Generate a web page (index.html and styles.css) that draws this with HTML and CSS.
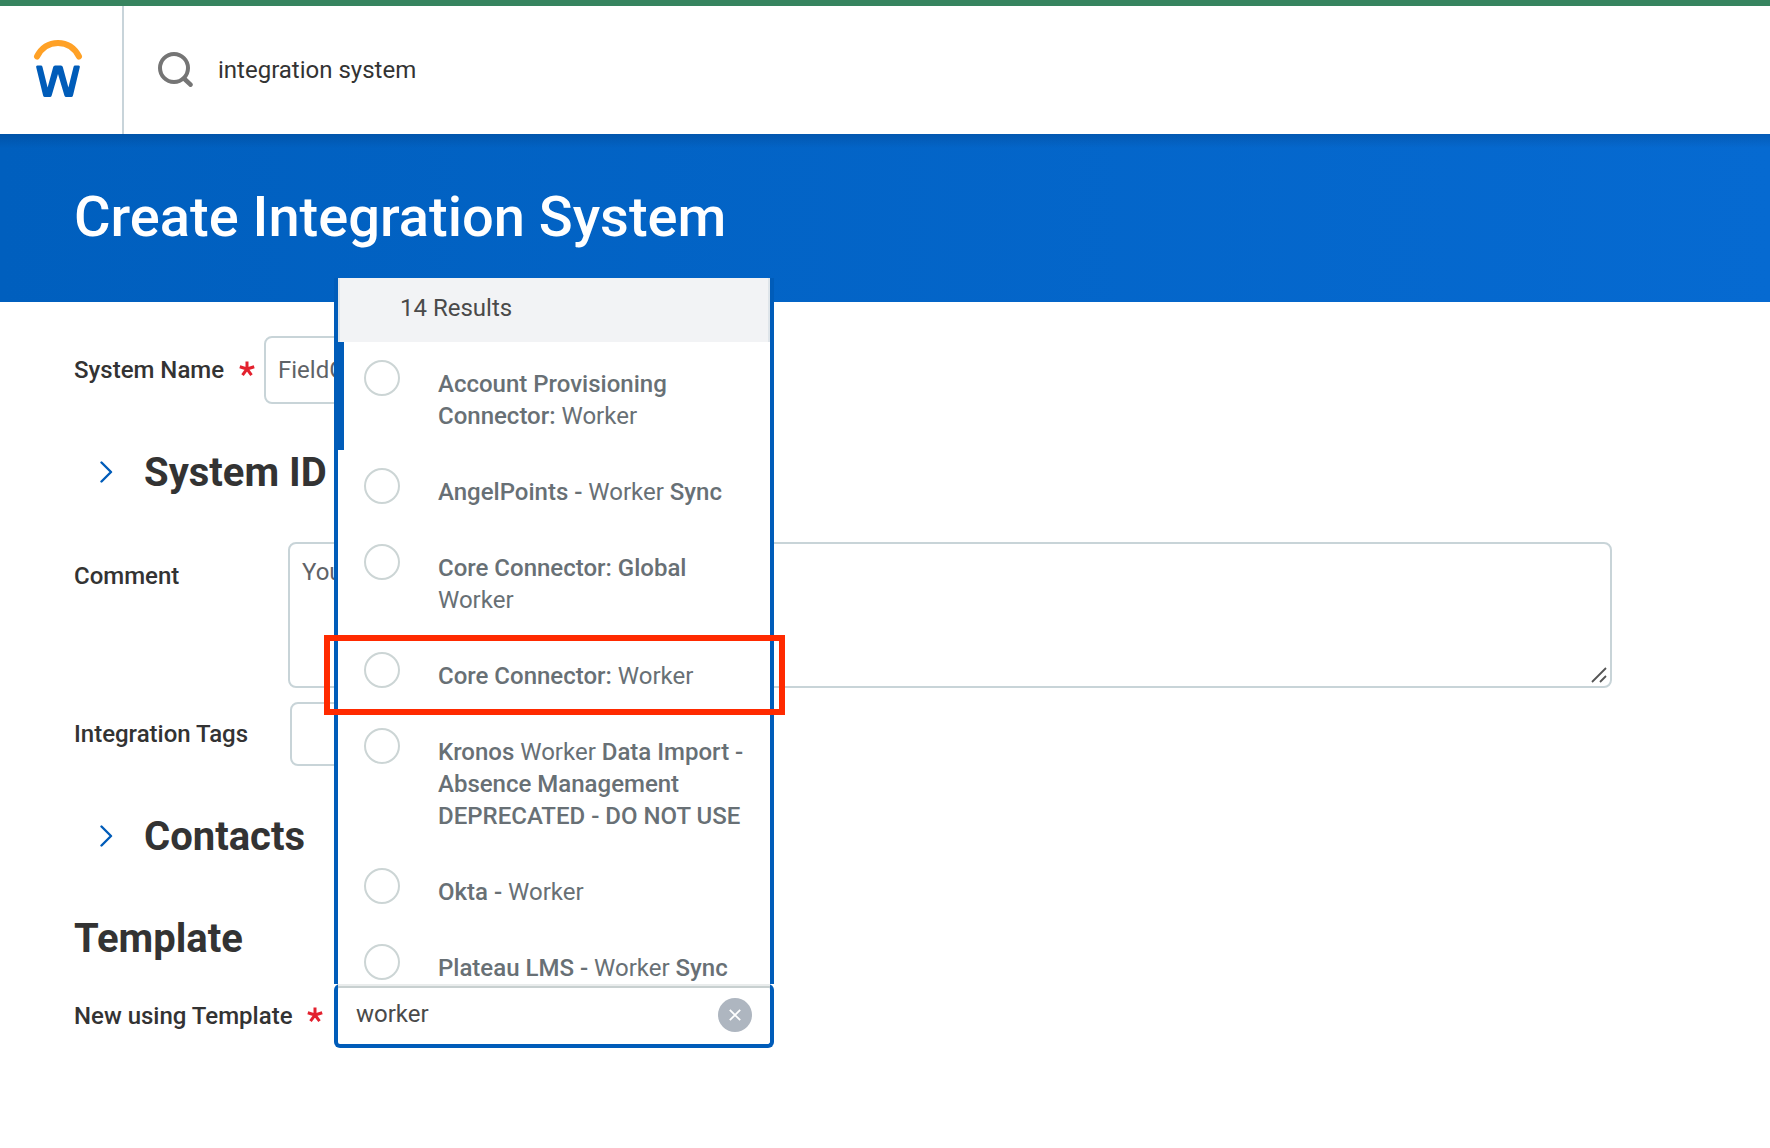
FILE: index.html
```html
<!DOCTYPE html>
<html lang="en">
<head>
<meta charset="utf-8">
<title>Create Integration System</title>
<link rel="stylesheet" href="styles.css">
</head>
<body>
<header class="topbar">
  <a class="logo" aria-label="Home">
    <svg width="60" height="64" viewBox="28 36 60 64" fill="none" stroke-linecap="round" stroke-linejoin="round">
      <path d="M37 56.500C41.500 47.800 49 43 58 43s16.500 4.800 21 13.500" stroke="#ffa126" stroke-width="6"/>
      <path d="M36.200 67.200q-.5-1.700 1.200-1.700h3.400q1.400 0 1.700 1.400L47.600 87.500 53.200 67q.4-1.500 1.900-1.500h5.800q1.500 0 1.900 1.500L68.400 87.500l5.100-20.600q.3-1.400 1.700-1.400h3.400q1.700 0 1.200 1.700L73 95.500q-.4 1.500-1.800 1.500h-5q-1.400 0-1.800-1.500L58 74l-6.300 21.500q-.4 1.500-1.800 1.500h-5q-1.400 0-1.800-1.500z" fill="#005cb9"/>
    </svg>
  </a>
  <div class="search">
    <svg width="36" height="36" viewBox="157 51 36 36" fill="none" stroke="#757575">
      <circle cx="174" cy="68" r="14" stroke-width="4"/>
      <path d="M184 78.500l6.500 6.200" stroke-width="4.500" stroke-linecap="round"/>
    </svg>
    <span class="query">integration system</span>
  </div>
</header>
<section class="hero"><h1>Create Integration System</h1></section>
<main class="form">
  <div class="row row-name">
    <label>System Name</label><span class="req"><svg width="16" height="16" viewBox="-8 -8 16 16"><path d="M0 0V-7.500M0 0L7.200-2.300M0 0L4.500 6.200M0 0L-4.500 6.200M0 0L-7.200-2.300"/></svg></span>
    <div class="box name-box">FieldGlass</div>
  </div>
  <div class="section section-id">
    <svg class="chev" width="14" height="22" viewBox="0 0 14 22"><path d="M1.500 1.500l9.500 9.500-9.500 9.500"/></svg>
    <h2>System ID</h2>
  </div>
  <div class="row row-comment">
    <label>Comment</label>
    <div class="box comment-box">Your
      <svg class="grip" width="16" height="16" viewBox="0 0 16 16"><path d="M1 15L15 1M9 15l6-6"/></svg>
    </div>
  </div>
  <div class="row row-tags">
    <label>Integration Tags</label>
    <div class="box tags-box"></div>
  </div>
  <div class="section section-contacts">
    <svg class="chev" width="14" height="22" viewBox="0 0 14 22"><path d="M1.500 1.500l9.500 9.500-9.500 9.500"/></svg>
    <h2>Contacts</h2>
  </div>
  <h2 class="template-title">Template</h2>
  <div class="row row-template">
    <label>New using Template</label><span class="req"><svg width="16" height="16" viewBox="-8 -8 16 16"><path d="M0 0V-7.500M0 0L7.200-2.300M0 0L4.500 6.200M0 0L-4.500 6.200M0 0L-7.200-2.300"/></svg></span>
    <div class="picker">
      <div class="picker-input">
        <span>worker</span>
        <span class="clear"><svg width="12" height="12" viewBox="0 0 12 12"><path d="M.8.8l10.400 10.400M11.200.8L.8 11.200"/></svg></span>
      </div>
      <div class="popup">
        <div class="count">14 Results</div>
        <ul class="options">
          <li class="option active"><i></i><p><b>Account Provisioning<br>Connector:</b> Worker</p></li>
          <li class="option"><i></i><p><b>AngelPoints -</b> Worker <b>Sync</b></p></li>
          <li class="option"><i></i><p><b>Core Connector: Global</b><br>Worker</p></li>
          <li class="option marked"><i></i><p><b>Core Connector:</b> Worker</p></li>
          <li class="option"><i></i><p><b>Kronos</b> Worker <b>Data Import -<br>Absence Management<br>DEPRECATED - DO NOT USE</b></p></li>
          <li class="option"><i></i><p><b>Okta -</b> Worker</p></li>
          <li class="option last"><i></i><p><b>Plateau LMS -</b> Worker <b>Sync</b></p></li>
        </ul>
      </div>
    </div>
  </div>
</main>
</body>
</html>
```
FILE: styles.css
```css
*, ::before, ::after { box-sizing: border-box; }
body {
  margin: 0;
  height: 1148px;
  overflow: hidden;
  background: #fff;
  color: #333;
  font: 24px/32px Roboto, sans-serif;
}
h1, h2, p, ul { margin: 0; padding: 0; }
svg { display: block; flex: none; }

.topbar { display: flex; height: 134px; border-top: 6px solid #37845f; background: #fff; }
.logo { width: 124px; padding: 30px 0 0 28px; border-right: 2px solid #c8d4da; }
.search { display: flex; align-items: flex-start; padding: 45px 0 0 33px; }
.query { margin: 3px 0 0 25px; white-space: nowrap; }

.hero {
  height: 168px;
  padding: 50px 0 0 74px;
  color: #fff;
  background: linear-gradient(rgba(0, 40, 90, .22), rgba(0, 40, 90, 0) 14px), linear-gradient(90deg, #005fbe, #066ad1);
}
h1 { font-size: 56px; line-height: 66px; font-weight: 500; white-space: nowrap; }

.form { padding: 34px 0 0 74px; }
.row { display: flex; align-items: flex-start; }
label { font-weight: 500; white-space: nowrap; }
.req path { fill: none; stroke: #e3212e; stroke-width: 3; }
.box { border: 2px solid #c8d4d8; border-radius: 8px; background: #fff; color: #5f6367; overflow: hidden; }
.row-name { height: 68px; }
.row-name label { width: 165px; margin-top: 18px; }
.row-name .req { width: 25px; margin-top: 25px; }
.name-box { width: 500px; height: 68px; padding: 16px 12px; }

.section { display: flex; align-items: center; height: 48px; }
.chev { margin: 0 30px 0 26px; }
.chev path { fill: none; stroke: #005cb9; stroke-width: 2.400; stroke-linecap: round; stroke-linejoin: round; }
h2 { font-size: 40px; line-height: 48px; font-weight: 700; white-space: nowrap; }
.section h2 { padding-top: 2px; }
.section-id { margin-top: 44px; }
.row-comment { margin-top: 46px; height: 146px; }
.row-comment label { width: 214px; margin-top: 18px; }
.comment-box { position: relative; width: 1324px; height: 146px; padding: 12px 12px; }
.grip { position: absolute; right: 3px; bottom: 3px; }
.grip path { fill: none; stroke: #555; stroke-width: 1.800; }
.row-tags { margin-top: 14px; }
.row-tags label { width: 216px; margin-top: 16px; }
.tags-box { width: 400px; height: 64px; }
.section-contacts { margin-top: 46px; }
.template-title { margin-top: 55px; }
.row-template { margin-top: 21px; }
.row-template label { width: 233px; margin-top: 16px; }
.row-template .req { width: 27px; margin-top: 23px; }

.picker { position: relative; width: 440px; height: 64px; }
.picker-input {
  display: flex;
  justify-content: space-between;
  height: 64px;
  padding: 14px 18px 0;
  border: 4px solid #005cb9;
  border-top: 0;
  border-radius: 6px;
  background: #fff;
  color: #4a4a4a;
}
.clear { display: grid; place-items: center; width: 34px; height: 34px; border-radius: 50%; background: #aeb6c0; }
.clear path { fill: none; stroke: #fff; stroke-width: 1.800; }
.popup {
  position: absolute;
  left: 0;
  bottom: 64px;
  width: 440px;
  border: solid #005cb9;
  border-width: 0 4px;
  background: #fff;
  color: #687075;
}
.popup::after { content: ""; position: absolute; left: 0; right: 0; top: 100%; height: 4px; border-top: 2px solid #e9ecec; background: #c8d0d0; }
.count { height: 64px; padding: 14px 60px 0; border: solid #dfe5ea; border-width: 0 2px; background: #f2f3f5; color: #4a4a4a; }
.options { list-style: none; }
.option { position: relative; display: flex; padding: 18px 0 18px 26px; }
.option i { flex: none; width: 36px; height: 36px; margin-bottom: 4px; border: 2px solid #ccd5d5; border-radius: 50%; }
.option p { margin: 8px 0 0 38px; white-space: nowrap; }
.option b { font-weight: 500; }
.option.active { box-shadow: inset 6px 0 #005cb9; }
.option.marked::after { content: ""; position: absolute; left: -14px; right: -15px; top: 1px; height: 80px; border: 6px solid #ff2a00; z-index: 2; }
.option.last { padding-bottom: 0; height: 58px; }
```
